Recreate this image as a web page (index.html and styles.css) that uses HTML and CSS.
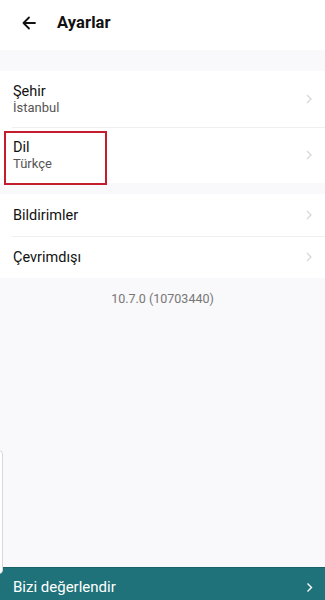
FILE: index.html
```html
<!DOCTYPE html>
<html lang="tr">
<head>
<meta charset="utf-8">
<link rel="stylesheet" href="styles.css">
</head>
<body>
<div class="app">
  <header class="topbar">
    <svg class="back" width="16" height="16" viewBox="0 0 16 16"><path d="M14 8H2.5M8 2.5L2.5 8L8 13.5" fill="none" stroke="#111" stroke-width="1.8" stroke-linecap="round" stroke-linejoin="round"/></svg>
    <h1 class="title">Ayarlar</h1>
  </header>
  <div class="gap top-gap"></div>
  <section class="card">
    <div class="row tall">
      <div class="texts"><div class="label">Şehir</div><div class="sub">İstanbul</div></div>
      <svg class="chev" width="6" height="10" viewBox="0 0 6 10"><path d="M1 1l4 4-4 4" fill="none" stroke="#d6d6d6" stroke-width="1.2"/></svg>
    </div>
    <div class="row tall highlighted">
      <div class="texts"><div class="label">Dil</div><div class="sub">Türkçe</div></div>
      <svg class="chev" width="6" height="10" viewBox="0 0 6 10"><path d="M1 1l4 4-4 4" fill="none" stroke="#d6d6d6" stroke-width="1.2"/></svg>
      <div class="redbox"></div>
    </div>
  </section>
  <div class="gap mid-gap"></div>
  <section class="card">
    <div class="row short">
      <div class="label">Bildirimler</div>
      <svg class="chev" width="6" height="10" viewBox="0 0 6 10"><path d="M1 1l4 4-4 4" fill="none" stroke="#d6d6d6" stroke-width="1.2"/></svg>
    </div>
    <div class="row short">
      <div class="label">Çevrimdışı</div>
      <svg class="chev" width="6" height="10" viewBox="0 0 6 10"><path d="M1 1l4 4-4 4" fill="none" stroke="#d6d6d6" stroke-width="1.2"/></svg>
    </div>
  </section>
  <div class="version">10.7.0 (10703440)</div>
  <div class="spacer"></div>
  <footer class="rate">
    <span>Bizi değerlendir</span>
    <svg width="7" height="11" viewBox="0 0 7 11"><path d="M1.5 1.5l4 4-4 4" fill="none" stroke="#ffffff" stroke-width="1.4"/></svg>
  </footer>
  <div class="edge"></div>
</div>
</body>
</html>
```
FILE: styles.css
```css
* { box-sizing: border-box; }
html, body { margin: 0; padding: 0; }
body {
  font-family: Roboto, "Noto Sans", "Liberation Sans", sans-serif;
  background: #f9f8fa;
  color: #111;
}
.app {
  position: relative;
  width: 325px;
  height: 600px;
  display: flex;
  flex-direction: column;
  background: #f9f8fa;
  overflow: hidden;
}
.topbar {
  height: 50px;
  background: #fff;
  display: flex;
  align-items: center;
  padding-left: 21px;
  flex-shrink: 0;
}
.back { margin-top: -4px; }
.title {
  margin: 0 0 0 20px;
  font-size: 16.5px;
  font-weight: 700;
  letter-spacing: 0.1px;
  margin-top: -5px;
}
.gap { flex-shrink: 0; }
.top-gap { height: 21px; }
.mid-gap { height: 11px; }
.card { background: #fff; flex-shrink: 0; }
.row {
  position: relative;
  display: flex;
  align-items: center;
  justify-content: space-between;
  padding: 0 13px 0 13px;
}
.row + .row::before {
  content: "";
  position: absolute;
  top: 0;
  left: 12px;
  right: 0;
  height: 1px;
  background: #f0eef1;
}
.tall { height: 56px; }
.short { height: 42px; }
.texts { display: flex; flex-direction: column; }
.label { font-size: 14.5px; color: #111; line-height: 17px; }
.sub { font-size: 13px; color: #555; line-height: 16px; }
.chev { margin-right: 0; }
.redbox {
  position: absolute;
  left: 4px;
  top: 4px;
  width: 103px;
  height: 54px;
  border: 2px solid #c41e2e;
  pointer-events: none;
}
.version {
  text-align: center;
  font-size: 12.5px;
  color: #777;
  padding-top: 13px;
  flex-shrink: 0;
}
.spacer { flex: 1; }
.rate {
  height: 33px;
  background: #1f727a;
  border-top: 1px solid #186269;
  color: #fff;
  display: flex;
  align-items: center;
  justify-content: space-between;
  padding: 0 12px 0 13px;
  font-size: 15px;
  flex-shrink: 0;
}
.rate span { margin-top: 6px; }
.rate svg { margin-top: 6px; }
.edge {
  position: absolute;
  left: -8px;
  top: 450px;
  width: 11px;
  height: 124px;
  border: 1px solid #d8d8dc;
  border-radius: 4px;
  background: #fff;
}
```
